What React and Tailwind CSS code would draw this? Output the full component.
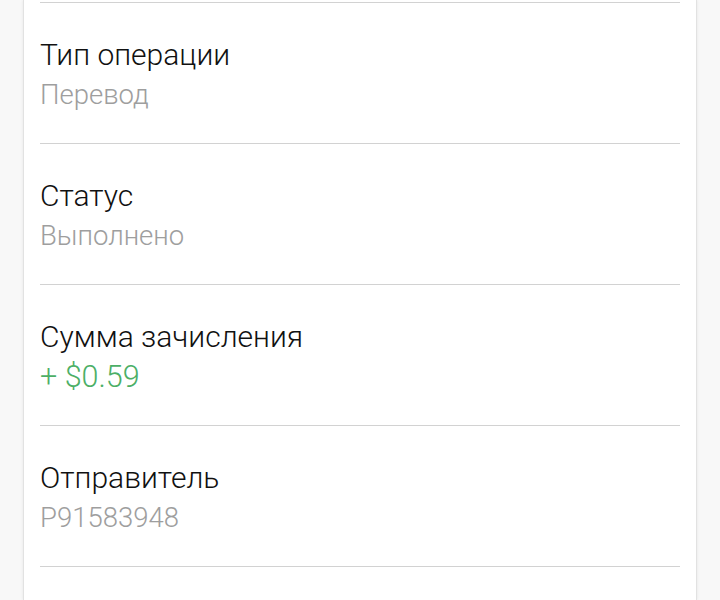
export default function App() {
  const rows = [
    { t: "Тип операции", v: "Перевод", c: "text-[#9e9e9e] text-[27.5px]" },
    { t: "Статус", v: "Выполнено", c: "text-[#9e9e9e] text-[27.5px]" },
    { t: "Сумма зачисления", v: "+ $0.59", c: "text-[#4caf66] text-[30.5px]" },
    { t: "Отправитель", v: "P91583948", c: "text-[#9e9e9e] text-[27.5px]" },
  ];
  return (
    <div className="w-[720px] h-[600px] overflow-hidden bg-[#f8f8f8] flex justify-center" style={{ fontFamily: "Roboto, 'Noto Sans', sans-serif" }}>
      <div className="w-[674px] h-full bg-white border-x border-[#e2e2e2] shadow-[0_0_3px_rgba(0,0,0,0.08)] px-4">
        <div className="h-[3px] border-b border-[#d2d2d2]" />
        {rows.map((r) => (
          <div key={r.t} className="pt-[32px] pb-[28px] border-b border-[#d2d2d2]">
            <div className="text-[30px] font-light leading-[40px] text-[#111111]">{r.t}</div>
            <div className={`font-light leading-[40px] ${r.c}`}>{r.v}</div>
          </div>
        ))}
      </div>
    </div>
  );
}
